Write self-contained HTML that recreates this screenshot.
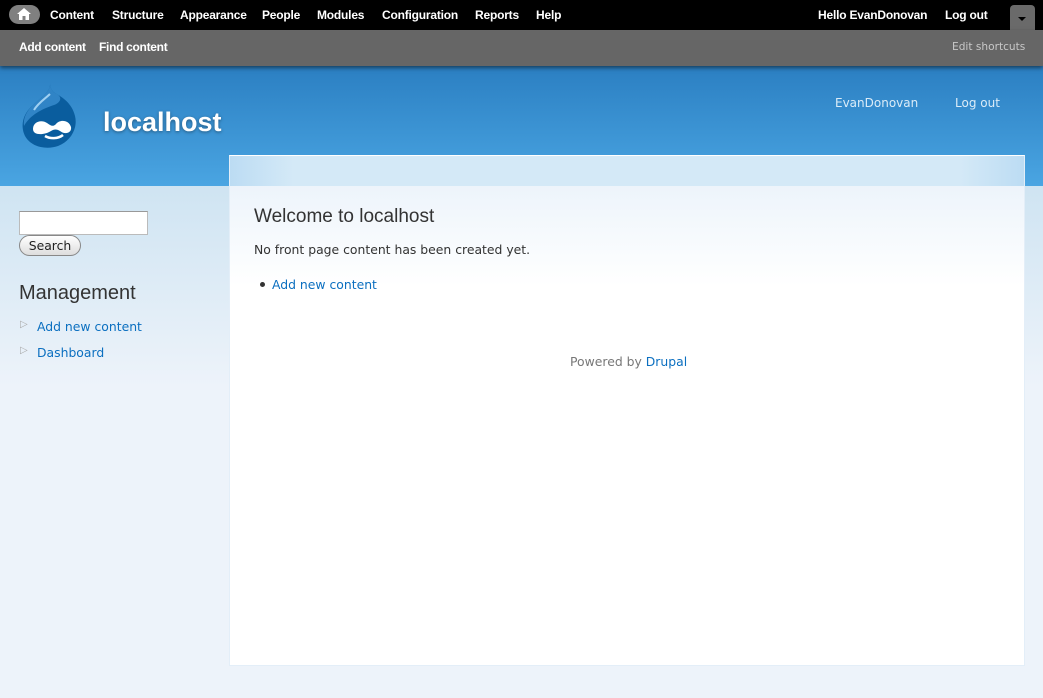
<!DOCTYPE html>
<html><head><meta charset="utf-8"><style>
*{margin:0;padding:0;box-sizing:border-box}
body{width:1043px;height:698px;overflow:hidden;background:#edf3fa;font-family:"DejaVu Sans","Liberation Sans",sans-serif;position:relative}
.a{position:absolute;white-space:nowrap}
#tb{position:absolute;left:0;top:0;width:1043px;height:30px;background:#000}
#tb .a{color:#fff;font-family:"Liberation Sans",sans-serif;font-weight:bold;font-size:12px;top:8px;letter-spacing:-0.2px}
#sc{position:absolute;left:0;top:30px;width:1043px;height:36px;background:#666;box-shadow:0 2px 4px rgba(0,0,0,.5);z-index:2}
#sc .a{color:#fff;font-family:"Liberation Sans",sans-serif;font-weight:bold;font-size:12px;top:10px;letter-spacing:-0.3px}
#hd{position:absolute;left:0;top:66px;width:1043px;height:120px;background:linear-gradient(#2b7fc2,#4aa5e2)}
#side{position:absolute;left:0;top:186px;width:1043px;height:200px;background:linear-gradient(#cfe4f2,#edf3fa)}
#main{position:absolute;left:229px;top:155px;width:796px;height:511px;background:#fff;border:1px solid #e3eef8;border-top:1px solid #fff}
#mtop{position:absolute;left:0;top:0;width:794px;height:30px;background:linear-gradient(90deg,#bcdcf3,#d4e9f7 8%,#d4e9f7 92%,#bcdcf3)}
#mgrad{position:absolute;left:0;top:30px;width:794px;height:100px;background:linear-gradient(#edf4fb,#fff)}
.t{font-size:12.4px}
a,.l{color:#0b6fc0}
</style></head><body>
<div id="tb">
 <div style="position:absolute;left:9px;top:5px;width:31px;height:19px;border-radius:10px;background:#808080"></div>
 <svg style="position:absolute;left:17px;top:8px" width="14" height="12" viewBox="0 0 14 12"><path d="M7 0L0 6h2v6h3.5V8h3v4H12V6h2z" fill="#fff"/></svg>
 <span class="a" style="left:50px">Content</span>
 <span class="a" style="left:112px">Structure</span>
 <span class="a" style="left:180px">Appearance</span>
 <span class="a" style="left:262px">People</span>
 <span class="a" style="left:317px">Modules</span>
 <span class="a" style="left:382px">Configuration</span>
 <span class="a" style="left:475px">Reports</span>
 <span class="a" style="left:536px">Help</span>
 <span class="a" style="left:818px">Hello EvanDonovan</span>
 <span class="a" style="left:945px">Log out</span>
 <div style="position:absolute;left:1010px;top:5px;width:25px;height:25px;background:#6a6a6a;border-radius:4px 4px 0 0"></div>
 <div style="position:absolute;left:1018px;top:17px;border:4px solid transparent;border-top:4px solid #000;border-bottom:0;width:0"></div>
</div>
<div id="sc">
 <span class="a" style="left:19px">Add content</span>
 <span class="a" style="left:99px">Find content</span>
 <span class="a" style="left:952px;top:11px;color:#c8c8c8;font-weight:normal;font-family:'DejaVu Sans',sans-serif;font-size:10.6px;letter-spacing:0">Edit shortcuts</span>
</div>
<div id="hd">
 <svg style="position:absolute;left:20px;top:17px" width="62" height="68" viewBox="0 0 62 68">
  <path d="M30 0C31 9 20 15 12 23C3 31 0 43 5 53C11 64 26 67 38 63C51 58 58 45 55 33C52 20 42 14 35 10C32 8 30 5 30 0Z" fill="#0a5d9e"/>
  <path d="M30 0C31 9 20 15 12 23C6 29 3 36 4 43C10 32 22 26 34 22C40 20 44 14 35 10C32 8 30 5 30 0Z" fill="#3a8fd0" opacity=".8"/>
  <path d="M14 27C18 20 26 15 30 11" stroke="#9fd0f2" stroke-width="2" fill="none"/>
  <path d="M13 46C13 39 21 36 27 40C31 43 33 44 36 41C40 36 49 37 51 44C52 50 45 52 40 48C37 46 34 46 31 48C25 52 13 53 13 46Z" fill="#fff"/>
  <path d="M25 53C30 56 38 56 43 52" stroke="#fff" stroke-width="2.5" fill="none"/>
 </svg>
 <span class="a" style="left:103px;top:41px;color:#fff;font-family:'Liberation Sans',sans-serif;font-weight:bold;font-size:27px;text-shadow:0 1px 3px rgba(0,0,0,.4)">localhost</span>
 <span class="a" style="left:835px;top:30px;color:#dbecf8;font-size:12px">EvanDonovan</span>
 <span class="a" style="left:955px;top:30px;color:#dbecf8;font-size:12px">Log out</span>
</div>
<div id="side"></div>
<div style="position:absolute;left:19px;top:211px;width:129px;height:24px;background:#fff;border:1px solid #bbb;border-top-color:#999"></div>
<div style="position:absolute;left:19px;top:235px;width:62px;height:21px;border:1px solid #888;border-radius:11px;background:linear-gradient(#fff,#ddd);font-size:12.4px;color:#222;text-align:center;line-height:20px">Search</div>
<span class="a" style="left:19px;top:282px;font-family:'Liberation Sans',sans-serif;font-size:20px;color:#333">Management</span>
<span class="a" style="left:20px;top:319px;font-size:10px;color:#aaa">▷</span>
<span class="a l t" style="left:37px;top:319px">Add new content</span>
<span class="a" style="left:20px;top:345px;font-size:10px;color:#aaa">▷</span>
<span class="a l t" style="left:37px;top:345px">Dashboard</span>
<div id="main"><div id="mtop"></div><div id="mgrad"></div>
 <span class="a" style="left:24px;top:50px;font-family:'Liberation Sans',sans-serif;font-size:19px;color:#333">Welcome to localhost</span>
 <span class="a t" style="left:24px;top:86px;color:#333">No front page content has been created yet.</span>
 <div style="position:absolute;left:30px;top:126px;width:5px;height:5px;border-radius:50%;background:#333"></div>
 <span class="a l t" style="left:42px;top:121px">Add new content</span>
 <span class="a t" style="left:340px;top:198px;color:#777">Powered by <span class="l">Drupal</span></span>
</div>
</body></html>
